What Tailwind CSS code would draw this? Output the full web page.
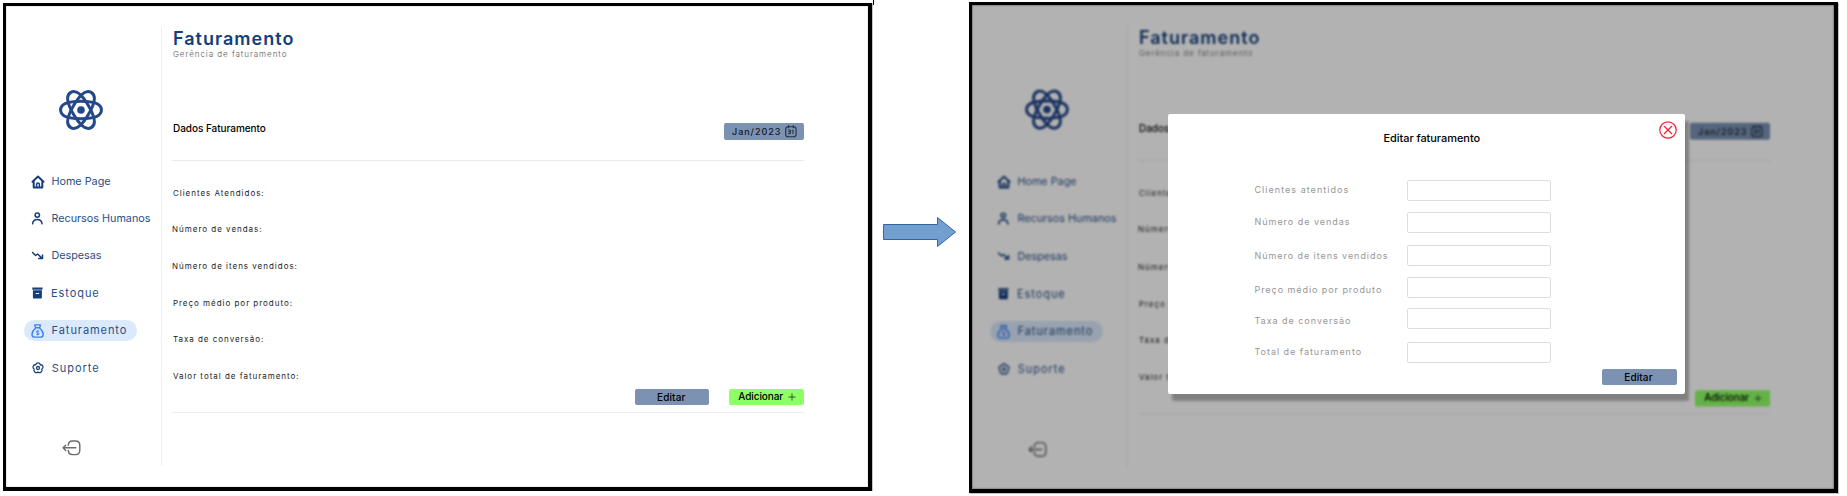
<!DOCTYPE html>
<html lang="pt-BR">
<head>
<meta charset="utf-8">
<title>Faturamento</title>
<script src="https://cdn.jsdelivr.net/npm/@tailwindcss/browser@4"></script>
</head>
<body class="bg-white font-['Inter',sans-serif] text-black">
<div class="relative flex h-[496px] w-[1847px] items-start overflow-hidden whitespace-nowrap">

  <!-- Billing screen -->
  <section class="mt-[3px] ml-[3px] h-[488px] w-[869px] shrink-0 border-[3px] border-r-4 border-b-4 border-black bg-white shadow-[1px_0_0_#c4c4c4,inset_0_0_1px_#555]">
    <div id="screen" class="flex h-[481px] w-[862px]">
      <aside class="flex w-[155px] shrink-0 flex-col">
        <svg class="mt-[82.5px] ml-[52.5px] h-[42px] w-[44px] shrink-0" viewBox="-22 -21 44 42" fill="none" stroke="#25488a" stroke-width="3">
          <path d="M-20.4 0C-20.4-6.300-11.500-8.700 0-8.700S20.400-6.300 20.400 0 11.500 8.700 0 8.700-20.400 6.300-20.400 0Z"/>
          <path transform="rotate(60)" d="M-20.400 0C-20.400-6.300-11.500-8.700 0-8.700S20.400-6.300 20.400 0 11.500 8.700 0 8.700-20.400 6.300-20.400 0Z"/>
          <path transform="rotate(120)" d="M-20.400 0C-20.400-6.300-11.500-8.700 0-8.700S20.400-6.300 20.400 0 11.500 8.700 0 8.700-20.400 6.300-20.400 0Z"/>
          <circle r="3.8" fill="#25488a" stroke="none"/>
        </svg>
        <nav class="mt-[40.7px] ml-[18px] flex flex-col gap-[16.26px] text-[11px] text-[#2a4f86]">
          <a class="flex h-[21px] items-center pl-[7px] text-[10.8px]">
            <svg class="mr-[6.4px] size-[14px] shrink-0" viewBox="0 0 14 14" fill="none" stroke="#143f7c" stroke-linejoin="round" stroke-linecap="round">
              <path stroke-width="2" d="M1.500 6.700 7 1.600l5.500 5.100M2.700 6v6.400h8.600V6"/>
              <path stroke-width="1.5" d="M5.600 12.200V9.500a1.400 1.400 0 0 1 2.800 0v2.700"/>
            </svg>Home Page</a>
          <a class="flex h-[21px] items-center pl-[7px] text-[10.8px]">
            <svg class="mr-[6.4px] size-[14px] shrink-0" viewBox="0 0 14 14" fill="none" stroke="#143f7c" stroke-width="1.5" stroke-linecap="round">
              <circle cx="6.3" cy="3.1" r="2.2"/>
              <path d="M1.600 11.800c.3-2.900 2.100-4.300 4.700-4.300s4.400 1.400 4.700 4.300"/>
            </svg>Recursos Humanos</a>
          <a class="flex h-[21px] items-center pl-[7px] text-[10.8px]">
            <svg class="mr-[6.4px] size-[14px] shrink-0" viewBox="0 0 14 14" fill="none" stroke="#143f7c" stroke-width="1.5" stroke-linecap="round" stroke-linejoin="round">
              <path d="m1.600 3.500 3 3 2-1.500 4.500 4.400M11.500 5.900v3.700H7.700"/>
            </svg>Despesas</a>
          <a class="flex h-[21px] items-center pl-[7px] tracking-[0.93px]">
            <svg class="mr-[6px] size-[14px] shrink-0" viewBox="0 0 14 14" fill="#143f7c">
              <path d="M1.300 1.500h10.200v2.200H1.300z"/>
              <path fill-rule="evenodd" d="M1.900 4.300h9v7.100q0 1-1 1h-7q-1 0-1-1zM4.700 6.900v1.100h3.400V6.900z"/>
            </svg>Estoque</a>
          <a class="flex h-[21px] w-[113px] items-center rounded-full bg-[#dbe9fd] pl-[7px] tracking-[0.93px]">
            <svg class="mr-[6.6px] size-[14px] shrink-0" viewBox="0 0 14 14" fill="none" stroke="#3d80f7" stroke-width="1.4" stroke-linejoin="round">
              <path d="M4.500 3.800 3.800.9h5.600l-.7 2.900M4 3.700h5.200M4.600 4.200C2.400 5.800 1 8.200 1 10.400q0 2.700 2.600 2.700h6q2.600 0 2.600-2.700c0-2.200-1.400-4.600-3.600-6.200"/>
              <path stroke-width=".9" d="M8.200 7.400c-.6-.8-2.900-.7-2.900.5s2.900.6 2.900 1.800-2.300 1.300-3 .4M6.700 6.200v5.200"/>
            </svg>Faturamento</a>
          <a class="flex h-[21px] items-center pl-[7px] tracking-[0.97px]">
            <svg class="mr-[6.8px] size-[14px] shrink-0" viewBox="0 0 14 14" fill="none" stroke="#143f7c" stroke-width="1.3" stroke-linejoin="round">
              <path d="M4.650 3.760A2.400 2.400 0 0 1 9.350 3.760A2.400 2.400 0 0 1 10.800 8.240A2.400 2.400 0 0 1 7 11A2.400 2.400 0 0 1 3.200 8.240A2.400 2.400 0 0 1 4.650 3.760Z"/>
              <circle cx="7" cy="7" r="1.500"/>
            </svg>Suporte</a>
        </nav>
        <svg class="mt-[61.2px] ml-[56px] h-[16px] w-[19px] shrink-0" viewBox="0 0 19 16" fill="none" stroke="#6b6b6b" stroke-width="1.4" stroke-linecap="round" stroke-linejoin="round">
          <path d="M6.300 5.300C6.500 2 7.600 1 10.300 1h3.200c3.200 0 4.300 1.100 4.300 4.300v5c0 3.200-1.100 4.300-4.300 4.300h-3.200c-2.700 0-3.800-1-4-4.200M13.800 7.800H1.500M3.700 5.200 1.100 7.800l2.600 2.600"/>
        </svg>
      </aside>
      <div class="mt-[21px] h-[439px] w-px shrink-0 bg-[#efefef]"></div>
      <main class="flex w-[641.5px] flex-col pl-[10.4px]">
        <h1 class="mt-[22px] h-[21px] pl-[0.5px] text-[18px] leading-[22px] font-semibold tracking-[1.03px] text-[#123e7b]">Faturamento</h1>
        <p class="h-[11.2px] pl-[0.5px] text-[8px] leading-[10.2px] font-light tracking-[0.97px] text-[#555]">Gerência de faturamento</p>
        <div class="mt-[62.8px] flex h-[17px] justify-between">
          <h2 class="pl-[0.6px] text-[10px] leading-[11.2px] font-medium tracking-[-0.04px]">Dados Faturamento</h2>
          <button class="flex w-[80px] items-center rounded-[2px] bg-[#7b92b3] pl-[8.5px] text-[9px] font-medium tracking-[0.97px] text-[#10161f]">Jan/2023
            <svg class="ml-[4px] h-[13px] w-[12px] shrink-0" viewBox="0 0 12 13" fill="none" stroke="#26303f" stroke-width="1.1" stroke-linecap="round">
              <rect x=".7" y="1.800" width="10.400" height="10" rx="2.600"/>
              <path d="M3.500.6v2.200M8.300.6v2.200"/>
              <path stroke-width="1" d="M3.400 5h1.900v3.700H3.400M3.700 6.800h1.600M7 5.500l1-.5v3.700"/>
            </svg>
          </button>
        </div>
        <div class="mt-[20px] h-px shrink-0 bg-[#e9eaea]"></div>
        <ul class="mt-[25.8px] flex flex-col gap-[24.64px] pl-[0.5px] text-[8px] leading-[12px] tracking-[0.98px] text-[#1c1c1c]">
          <li>Clientes Atendidos:</li>
          <li class="-ml-[0.8px]">Número de vendas:</li>
          <li class="-ml-[0.8px]">Número de itens vendidos:</li>
          <li>Preço médio por produto:</li>
          <li>Taxa de conversão:</li>
          <li>Valor total de faturamento:</li>
        </ul>
        <div class="mt-[6.9px] flex h-[16px] justify-end gap-[20px] text-[10px] font-medium">
          <button class="edit w-[74.5px] rounded-[2px] bg-[#7b92b3] pr-[1px] leading-[17px] tracking-[0.1px]">Editar</button>
          <button class="flex w-[74.5px] items-center rounded-[2px] bg-[#8fff66] pl-[9.3px] leading-[17px] tracking-[-0.1px]">Adicionar
            <svg class="ml-[5px] size-[8px]" viewBox="0 0 8 8" stroke="#2c4a24" stroke-width=".9"><path d="M4 .4v7.200M.4 4h7.200"/></svg>
          </button>
        </div>
        <div class="mt-[7.1px] h-px shrink-0 bg-[#efefef]"></div>
      </main>
    </div>
  </section>

  <div class="absolute top-0 left-[873px] h-[5px] w-px bg-black"></div>

  <svg class="mt-[216px] ml-[10px] h-[32px] w-[75px] shrink-0" viewBox="0 0 75 32" fill="#729fcf" stroke="#3465a4" stroke-width="1">
    <path d="M1.500 8.500h54v-7L73.500 16 55.500 30.500v-7h-54z"/>
  </svg>

  <!-- Same screen behind the edit dialog -->
  <section class="relative mt-[2px] ml-[12px] h-[491px] w-[869px] shrink-0 border-[3px] border-r-4 border-b-4 border-black bg-white shadow-[1px_1px_0_#c4c4c4]">
    <div id="backdrop" class="h-[484px] w-[862px] origin-top-left scale-y-[1.006] blur-[1.2px]"></div>
    <div class="absolute inset-0 bg-black/30 shadow-[inset_0_0_2px_#333]"></div>

    <div class="absolute top-[109px] left-[196px] h-[280px] w-[517px] rounded-[2px] bg-white shadow-[4px_7px_3px_rgba(0,0,0,0.28)]">
      <div class="flex h-[48px] items-start justify-between pr-[8px] pl-[215.4px]">
        <h2 class="mt-[17px] text-[11px] leading-[14px] font-medium tracking-[-0.05px]">Editar faturamento</h2>
        <svg class="mt-[7px] size-[18px]" viewBox="0 0 18 18" fill="none" stroke="#f5222d" stroke-width="1.2">
          <circle cx="9" cy="9" r="8.200"/><path d="m5 5 8 8M13 5l-8 8"/>
        </svg>
      </div>
      <form class="flex flex-col pt-[17.5px] pl-[86.5px] text-[9px] leading-[20px] tracking-[0.97px] text-[#969696]">
        <label class="flex h-[32.5px] tracking-[1.03px]"><span class="w-[152.5px]">Clientes atentidos</span><input class="h-[21px] w-[144px] rounded-[2px] border border-[#dedede]"></label>
        <label class="flex h-[33px]"><span class="w-[152.5px]">Número de vendas</span><input class="h-[21px] w-[144px] rounded-[2px] border border-[#dedede]"></label>
        <label class="flex h-[31.7px]"><span class="w-[152.5px] pt-[0.6px] tracking-[0.94px]">Número de itens vendidos</span><input class="h-[21px] w-[144px] rounded-[2px] border border-[#dedede]"></label>
        <label class="flex h-[31.3px]"><span class="w-[152.5px] pt-[3px] tracking-[0.94px]">Preço médio por produto</span><input class="h-[21px] w-[144px] rounded-[2px] border border-[#dedede]"></label>
        <label class="flex h-[34px]"><span class="w-[152.5px] pt-[3px]">Taxa de conversão</span><input class="h-[21px] w-[144px] rounded-[2px] border border-[#dedede]"></label>
        <label class="flex h-[27px]"><span class="w-[152.5px] pt-[0.5px]">Total de faturamento</span><input class="h-[21px] w-[144px] rounded-[2px] border border-[#dedede]"></label>
      </form>
      <div class="flex justify-end pr-[8.3px]">
        <button class="h-[16px] w-[74.5px] rounded-[2px] bg-[#7b92b3] pr-[2px] text-[10px] leading-[17px] font-medium tracking-[0.1px]">Editar</button>
      </div>
    </div>
  </section>
</div>
<script>
  // The dialog brings its own edit button, so the dimmed copy leaves it out.
  const copy = document.getElementById('screen').cloneNode(true);
  copy.removeAttribute('id');
  copy.querySelector('.edit').remove();
  document.getElementById('backdrop').append(copy);
</script>
</body>
</html>
